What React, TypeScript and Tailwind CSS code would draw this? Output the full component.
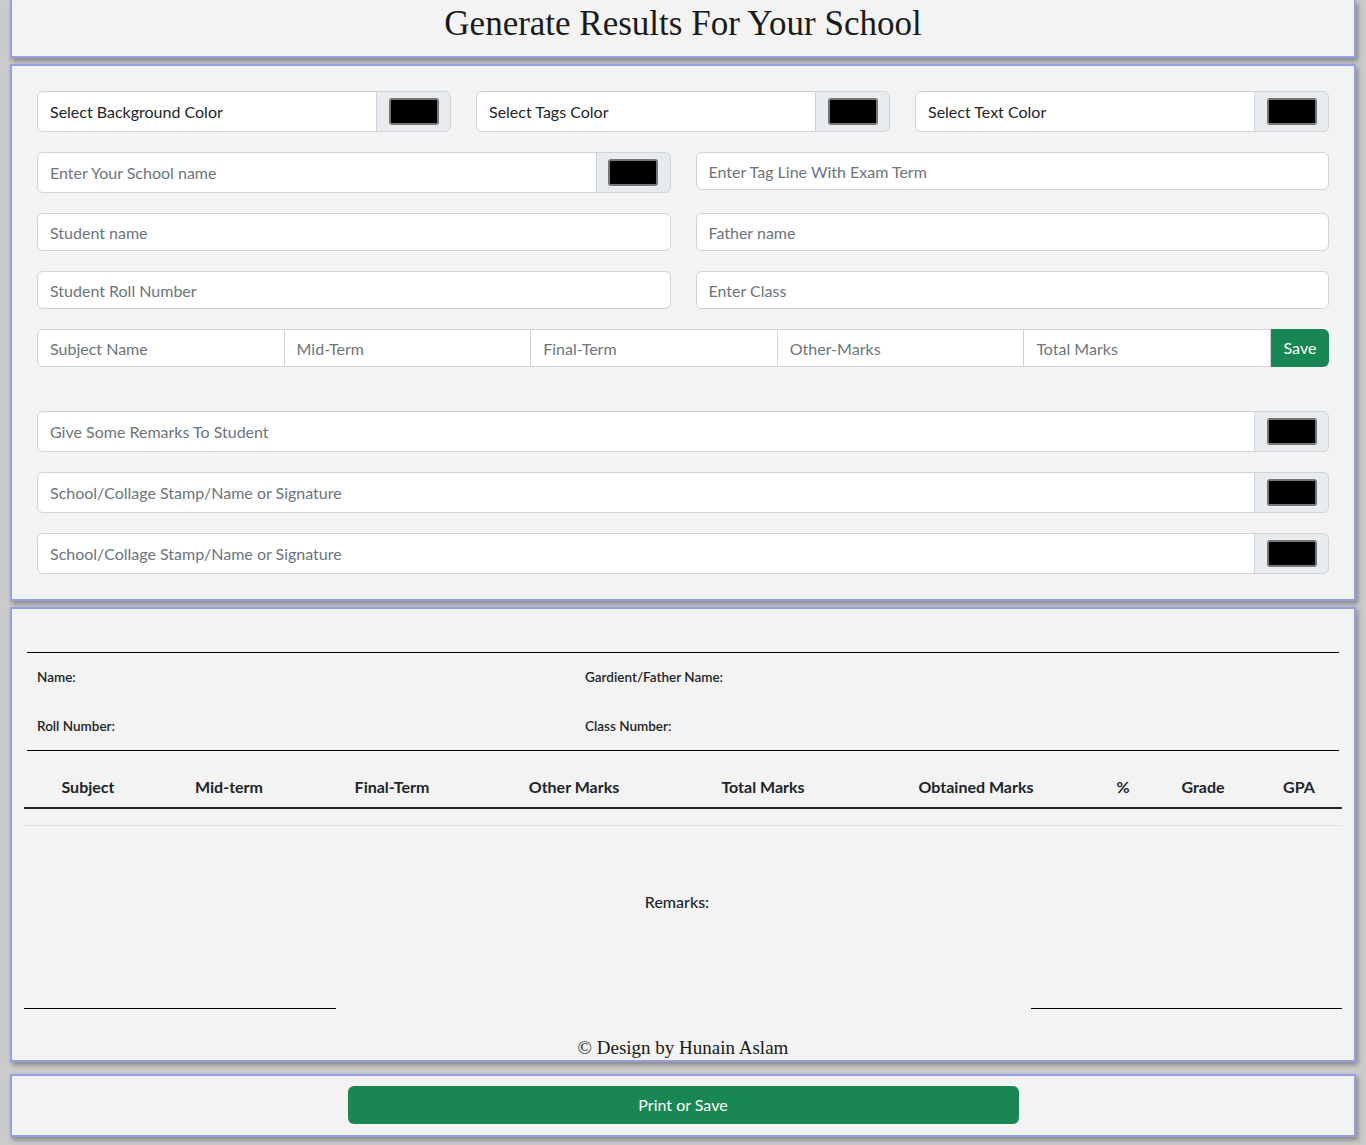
import React from "react";

const inputCls =
  "h-full min-w-0 flex-1 bg-white px-3 text-[16px] text-[#212529] outline-none placeholder:text-[#6c757d]";

function Swatch() {
  return (
    <div className="flex w-[75px] shrink-0 items-center justify-center border border-[#ced4da] bg-[#e9ecef] rounded-r-[6px] -ml-px">
      <div className="h-[27px] w-[50px] rounded-[3px] border-2 border-[#767676] bg-black" />
    </div>
  );
}

function ColorGroup({ value, placeholder }: { value?: string; placeholder?: string }) {
  return (
    <div className="flex h-[41px]">
      <input
        className={inputCls + " rounded-l-[6px] border border-[#ced4da]"}
        defaultValue={value}
        placeholder={placeholder}
        readOnly={!!value}
      />
      <Swatch />
    </div>
  );
}

function Field({ placeholder }: { placeholder: string }) {
  return (
    <div className="flex h-[38px]">
      <input className={inputCls + " rounded-[6px] border border-[#ced4da]"} placeholder={placeholder} />
    </div>
  );
}

const cols = [
  ["Subject", "w-[128px]"],
  ["Mid-term", "w-[154px]"],
  ["Final-Term", "w-[172px]"],
  ["Other Marks", "w-[192px]"],
  ["Total Marks", "w-[186px]"],
  ["Obtained Marks", "w-[240px]"],
  ["%", "w-[54px]"],
  ["Grade", "w-[106px]"],
  ["GPA", "w-[86px]"],
];

const panel = "border-2 border-[#979fe3] bg-[#f3f3f3] shadow-[2px_3px_5px_rgba(0,0,0,0.35)]";

export default function App() {
  return (
    <div className="min-h-screen bg-[#cbcbcb] px-[10px] pb-[7px] font-['Lato',sans-serif] text-[#212529]">
      <header className={panel + " flex h-[58px] items-center justify-center border-t-0"}>
        <h1 className="font-['Liberation_Serif',serif] text-[35px] leading-none text-[#1a1a1a] pb-[10px]">
          Generate Results For Your School
        </h1>
      </header>

      <section className={panel + " mt-[6px] p-[25px]"}>
        <div className="grid grid-cols-3 gap-[25px]">
          <ColorGroup value="Select Background Color" />
          <ColorGroup value="Select Tags Color" />
          <ColorGroup value="Select Text Color" />
        </div>
        <div className="mt-[20px] grid grid-cols-2 items-start gap-x-[25px] gap-y-[20px]">
          <ColorGroup placeholder="Enter Your School name" />
          <Field placeholder="Enter Tag Line With Exam Term" />
          <Field placeholder="Student name" />
          <Field placeholder="Father name" />
          <Field placeholder="Student Roll Number" />
          <Field placeholder="Enter Class" />
        </div>
        <div className="mt-[20px] flex h-[38px]">
          {["Subject Name", "Mid-Term", "Final-Term", "Other-Marks", "Total Marks"].map((p, i) => (
            <input
              key={p}
              className={
                inputCls +
                " border border-[#ced4da] " +
                (i === 0 ? "rounded-l-[6px]" : "-ml-px")
              }
              placeholder={p}
            />
          ))}
          <button className="w-[58px] shrink-0 rounded-r-[6px] bg-[#198754] text-[16px] text-white">
            Save
          </button>
        </div>
        <div className="mt-[44px] flex flex-col gap-[20px]">
          <ColorGroup placeholder="Give Some Remarks To Student" />
          <ColorGroup placeholder="School/Collage Stamp/Name or Signature" />
          <ColorGroup placeholder="School/Collage Stamp/Name or Signature" />
        </div>
      </section>

      <section className={panel + " mt-[6px]"}>
        <div className="h-[43px]" />
        <div className="mx-[15px] border-t border-black" />
        <div className="mx-[15px] flex h-[97px] flex-col gap-[29px] px-[10px] pt-[14px] text-[13.5px] font-semibold">
          <div className="grid h-[20px] grid-cols-[548px_1fr] items-center">
            <span>Name:</span>
            <span>Gardient/Father Name:</span>
          </div>
          <div className="grid h-[20px] grid-cols-[548px_1fr] items-center">
            <span>Roll Number:</span>
            <span>Class Number:</span>
          </div>
        </div>
        <div className="mx-[15px] border-t border-black" />

        <div className="mx-[12px] mt-[16px]">
          <div className="flex border-b-2 border-[#212529]">
            {cols.map(([c, w]) => (
              <div key={c} className={w + " py-2 text-center text-[16px] font-bold leading-6"}>
                {c}
              </div>
            ))}
          </div>
          <div className="h-[17px] border-b border-[#dee2e6]" />
        </div>

        <p className="mt-[64px] text-center text-[16px] font-medium leading-6 pr-[12px]">Remarks:</p>

        <div className="mx-[12px] mt-[94px] flex justify-between">
          <div className="w-[312px] border-t border-black" />
          <div className="w-[311px] border-t border-black" />
        </div>

        <p className="mt-[27px] text-center font-['Liberation_Serif',serif] text-[19px] leading-6 text-[#1a1a1a]">
          © Design by Hunain Aslam
        </p>
      </section>

      <footer className={panel + " mt-[12px] pb-[11px] pt-[10px]"}>
        <button className="mx-auto block h-[38px] w-[671px] rounded-[6px] bg-[#198754] text-[16px] text-white">
          Print or Save
        </button>
      </footer>
    </div>
  );
}
